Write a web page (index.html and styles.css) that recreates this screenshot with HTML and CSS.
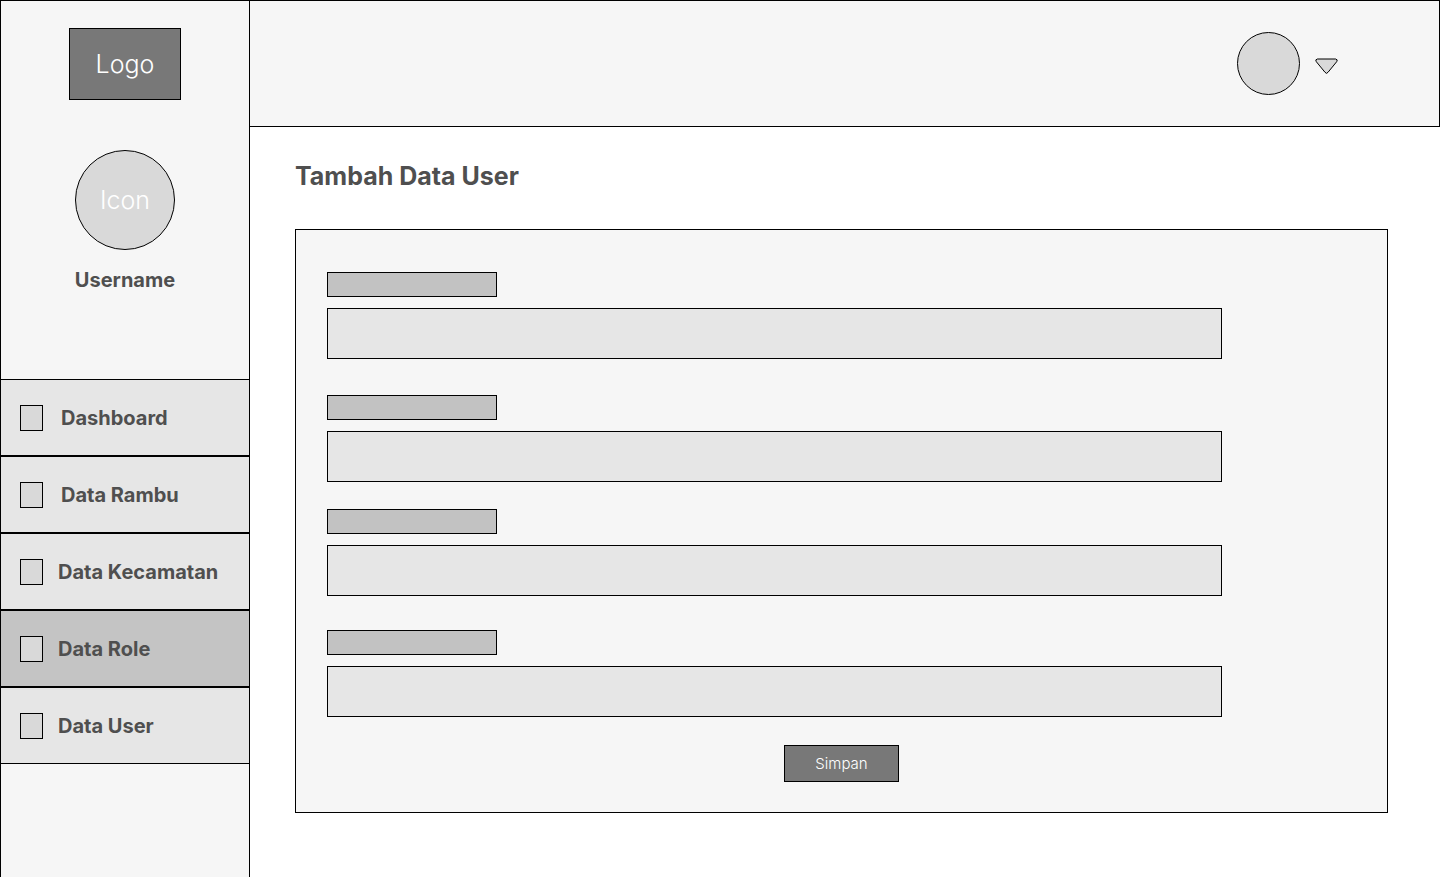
FILE: index.html
```html
<!DOCTYPE html>
<html lang="id">
<head>
  <meta charset="utf-8">
  <meta name="viewport" content="width=device-width, initial-scale=1">
  <title>Tambah Data User</title>
  <link rel="stylesheet" href="styles.css">
</head>
<body>
  <div class="layout">
    <aside class="sidebar">
      <div class="logo">Logo</div>
      <div class="profile">
        <div class="profile-icon">Icon</div>
        <div class="profile-name">Username</div>
      </div>
      <nav class="nav">
        <a class="nav-item nav-item-wide" href="#"><span class="nav-icon"></span>Dashboard</a>
        <a class="nav-item nav-item-wide" href="#"><span class="nav-icon"></span>Data Rambu</a>
        <a class="nav-item" href="#"><span class="nav-icon"></span>Data Kecamatan</a>
        <a class="nav-item nav-item-active" href="#" aria-current="page"><span class="nav-icon"></span>Data Role</a>
        <a class="nav-item" href="#"><span class="nav-icon"></span>Data User</a>
      </nav>
    </aside>
    <div class="page">
      <header class="topbar">
        <button class="account" type="button" aria-label="Account">
          <span class="avatar"></span>
          <svg class="caret" width="25" height="18" viewBox="0 0 25 18" aria-hidden="true">
            <path d="M3.3 2H21.7Q24.2 2.5 22.7 4.7L14 15.3Q12.5 17.4 11 15.3L2.3 4.7Q0.8 2.5 3.3 2Z" fill="#d9d9d9" stroke="#000"/>
          </svg>
        </button>
      </header>
      <main class="content">
        <h1 class="title">Tambah Data User</h1>
        <form class="panel">
          <div class="fields">
            <div class="field field-loose">
              <label class="field-label" for="field-1"></label>
              <input class="field-input" id="field-1" type="text">
            </div>
            <div class="field field-tight">
              <label class="field-label" for="field-2"></label>
              <input class="field-input" id="field-2" type="text">
            </div>
            <div class="field">
              <label class="field-label" for="field-3"></label>
              <input class="field-input" id="field-3" type="text">
            </div>
            <div class="field">
              <label class="field-label" for="field-4"></label>
              <input class="field-input" id="field-4" type="text">
            </div>
          </div>
          <button class="submit" type="button">Simpan</button>
        </form>
      </main>
    </div>
  </div>
</body>
</html>
```

FILE: styles.css
```css
* {
  box-sizing: border-box;
}

body {
  margin: 0;
  background: #fff;
  color: #4f4f4f;
  font-family: Inter, "Liberation Sans", sans-serif;
}

.layout {
  display: flex;
  min-height: 100vh;
}

.sidebar {
  flex: 0 0 250px;
  display: flex;
  flex-direction: column;
  align-items: center;
  padding-top: 27px;
  background: #f6f6f6;
  border: 1px solid #000;
  border-bottom: 0;
}

.logo {
  display: grid;
  place-items: center;
  width: 112px;
  height: 72px;
  background: #787878;
  border: 1px solid #000;
  color: #fff;
  font-size: 25px;
  font-weight: 300;
  line-height: 30px;
}

.profile {
  display: flex;
  flex-direction: column;
  align-items: center;
  gap: 18px;
  margin: 50px 0 87px;
}

.profile-icon {
  display: grid;
  place-items: center;
  width: 100px;
  height: 100px;
  background: #d9d9d9;
  border: 1px solid #000;
  border-radius: 50%;
  color: #fff;
  font-size: 25px;
  font-weight: 300;
  line-height: 30px;
}

.profile-name {
  font-size: 20px;
  font-weight: 700;
  line-height: 24px;
}

.nav {
  align-self: stretch;
}

.nav-item {
  display: flex;
  align-items: center;
  gap: 15px;
  height: 77px;
  padding-left: 19px;
  background: #e6e6e6;
  border: solid #000;
  border-width: 1px 0;
  color: inherit;
  font-size: 20px;
  font-weight: 700;
  line-height: 24px;
  text-decoration: none;
}

.nav-item-wide {
  gap: 18px;
}

.nav-item-active {
  background: #c4c4c4;
}

.nav-icon {
  width: 23px;
  height: 26px;
  background: #d9d9d9;
  border: 1px solid #000;
}

.page {
  flex: 1;
  min-width: 0;
}

.topbar {
  display: flex;
  align-items: center;
  justify-content: flex-end;
  height: 127px;
  padding-right: 100px;
  background: #f6f6f6;
  border: 1px solid #000;
  border-left: 0;
}

.account {
  display: flex;
  align-items: center;
  gap: 14px;
  padding: 0;
  background: none;
  border: 0;
  cursor: pointer;
}

.avatar {
  width: 63px;
  height: 63px;
  background: #d9d9d9;
  border: 1px solid #000;
  border-radius: 50%;
}

.caret {
  margin-top: 4px;
}

.content {
  padding: 34px 52px 64px 45px;
}

.title {
  margin: 0 0 38px;
  font-size: 25px;
  font-weight: 700;
  line-height: 30px;
}

.panel {
  padding: 42px 0 30px;
  background: #f6f6f6;
  border: 1px solid #000;
}

.fields {
  padding: 0 165px 28px 31px;
}

.field {
  display: flex;
  flex-direction: column;
  gap: 11px;
  margin-bottom: 34px;
}

.field-loose {
  margin-bottom: 36px;
}

.field-tight {
  margin-bottom: 27px;
}

.field:last-child {
  margin-bottom: 0;
}

.field-label {
  width: 170px;
  height: 25px;
  background: #c2c2c2;
  border: 1px solid #000;
}

.field-input {
  width: 100%;
  height: 51px;
  padding: 0 16px;
  background: #e6e6e6;
  border: 1px solid #000;
  border-radius: 0;
  font: inherit;
}

.submit {
  display: block;
  width: 115px;
  height: 37px;
  margin: 0 auto;
  padding: 0;
  background: #787878;
  border: 1px solid #000;
  color: #fff;
  font-family: inherit;
  font-size: 15px;
  font-weight: 300;
  line-height: 18px;
  cursor: pointer;
}
```
